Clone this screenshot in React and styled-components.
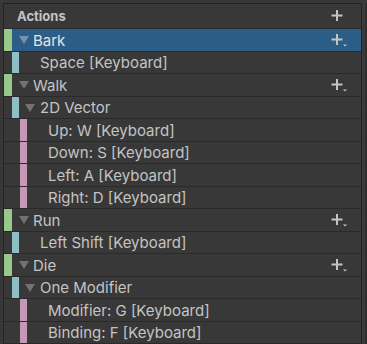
import React from 'react';
import styled, { createGlobalStyle } from 'styled-components';

const GlobalStyle = createGlobalStyle`
  html, body {
    margin: 0;
    background: #383838;
  }
  body {
    font-family: Inter, "Noto Sans", sans-serif;
    overflow: hidden;
  }
`;

const Frame = styled.div`
  display: flex;
  width: 367px;
  height: 344px;
  padding: 3px 0 0 3px;
  box-sizing: border-box;
  background: #383838;
`;

const Panel = styled.div`
  width: 357px;
  border-top: 1px solid #232323;
  border-left: 1px solid #232323;
  border-right: 1px solid #232323;
  display: flex;
  flex-direction: column;
`;

const Track = styled.div`
  flex: 1;
  background: #3a3a3a;
  border-right: 2px solid #2f2f2f;
`;

const Header = styled.div`
  height: 24px;
  display: flex;
  align-items: center;
  justify-content: space-between;
  padding: 0 14px 0 13px;
  border-bottom: 1px solid #2a2a2a;
  font-size: 13px;
  font-weight: 700;
  color: #c4c4c4;
`;

const Row = styled.div`
  height: 21.5px;
  flex-shrink: 0;
  display: flex;
  align-items: stretch;
  border-bottom: 1px solid #2a2a2a;
  padding-left: ${(p) => p.$depth * 8}px;
  color: ${(p) => (p.$selected ? '#e4e4e4' : '#c4c4c4')};
  font-size: 15px;
`;

const Bar = styled.div`
  width: ${(p) => (p.$depth === 0 ? 8 : 7)}px;
  flex-shrink: 0;
  background: ${(p) => p.$color};
`;

const Body = styled.div`
  flex: 1;
  display: flex;
  align-items: center;
  padding-right: 14px;
  background: ${(p) => (p.$selected ? '#2c5d87' : 'transparent')};
`;

const Slot = styled.div`
  width: 21px;
  flex-shrink: 0;
  display: flex;
  align-items: center;
  padding-left: ${(p) => (p.$depth === 0 ? 7 : 6)}px;
  box-sizing: border-box;
`;

const Arrow = styled.div`
  width: 0;
  height: 0;
  border-left: 5px solid transparent;
  border-right: 5px solid transparent;
  border-top: 8px solid ${(p) => (p.$selected ? '#7590ab' : '#727272')};
  margin-top: 1px;
`;

const Label = styled.span`
  flex: 1;
  white-space: nowrap;
  padding-top: 1px;
`;

const Plus = ({ drop }) => (
  <svg width="16" height="14" viewBox="0 0 16 14">
    <rect x="5" y="1" width="2" height="11" fill="#c4c4c4" />
    <rect x="0.5" y="5.5" width="11" height="2" fill="#c4c4c4" />
    {drop && <path d="M12 11.5 h4 l-2 2 z" fill="#c4c4c4" />}
  </svg>
);

const GREEN = '#98c98b';
const TEAL = '#8fbfc4';
const PINK = '#c797b8';

const rows = [
  { label: 'Bark', depth: 0, kind: 'action', selected: true },
  { label: 'Space [Keyboard]', depth: 1, kind: 'binding' },
  { label: 'Walk', depth: 0, kind: 'action' },
  { label: '2D Vector', depth: 1, kind: 'composite' },
  { label: 'Up: W [Keyboard]', depth: 2, kind: 'part' },
  { label: 'Down: S [Keyboard]', depth: 2, kind: 'part' },
  { label: 'Left: A [Keyboard]', depth: 2, kind: 'part' },
  { label: 'Right: D [Keyboard]', depth: 2, kind: 'part' },
  { label: 'Run', depth: 0, kind: 'action' },
  { label: 'Left Shift [Keyboard]', depth: 1, kind: 'binding' },
  { label: 'Die', depth: 0, kind: 'action' },
  { label: 'One Modifier', depth: 1, kind: 'composite' },
  { label: 'Modifier: G [Keyboard]', depth: 2, kind: 'part' },
  { label: 'Binding: F [Keyboard]', depth: 2, kind: 'part' },
];

const colorFor = (kind) =>
  kind === 'action' ? GREEN : kind === 'part' ? PINK : TEAL;

const App = () => {
  return (
    <>
      <GlobalStyle />
      <Frame>
        <Panel>
          <Header>
            <span>Actions</span>
            <Plus />
          </Header>
          {rows.map((r) => {
            const expandable = r.kind === 'action' || r.kind === 'composite';
            return (
              <Row key={r.label} $depth={r.depth} $selected={r.selected}>
                <Bar $depth={r.depth} $color={colorFor(r.kind)} />
                <Body $selected={r.selected}>
                  <Slot $depth={r.depth}>
                    {expandable && <Arrow $selected={r.selected} />}
                  </Slot>
                  <Label>{r.label}</Label>
                  {r.kind === 'action' && <Plus drop />}
                </Body>
              </Row>
            );
          })}
        </Panel>
        <Track />
      </Frame>
    </>
  );
};

export default App;
